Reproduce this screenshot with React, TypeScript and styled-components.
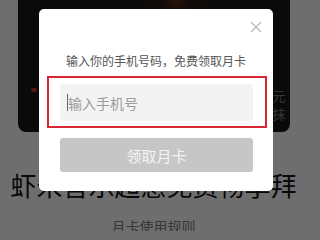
import React from "react";
import styled, { createGlobalStyle } from "styled-components";

const Global = createGlobalStyle`
  html, body { margin: 0; padding: 0; background: #fff; }
  body { font-family: "Noto Sans CJK SC", "Noto Sans", sans-serif; width: 307px; height: 231px; overflow: hidden; }
`;

const Page = styled.div`
  width: 307px;
  height: 231px;
  display: flex;
  flex-direction: column;
  align-items: center;
  background: #fff;
  overflow: hidden;
`;

const Card = styled.div`
  width: 272px;
  height: 132px;
  flex-shrink: 0;
  background: radial-gradient(circle at 58% 0%, #5a2e1c 0, #2a1810 14px, #181818 40px);
  border-radius: 0 0 8px 8px;
  display: flex;
  justify-content: flex-end;
  align-items: flex-end;
  padding: 0 4px 10px 0;
  box-sizing: border-box;
  position: relative;
`;

const CardSide = styled.div`
  display: flex;
  flex-direction: column;
  gap: 2px;
  color: #7c7c7c;
  font-size: 13px;
  line-height: 16px;
`;

const Dot = styled.span`
  position: absolute;
  left: 13px;
  top: 88px;
  width: 6px;
  height: 4px;
  border-radius: 3px;
  background: #c0392b;
`;

const Headline = styled.div`
  margin-top: 38px;
  font-size: 26px;
  line-height: 30px;
  color: #141414;
  white-space: nowrap;
`;

const Rule = styled.div`
  margin-top: 16px;
  font-size: 14px;
  line-height: 20px;
  color: #808080;
`;

const Overlay = styled.div`
  position: fixed;
  inset: 0;
  background: rgba(0, 0, 0, 0.57);
`;

const Modal = styled.div`
  position: fixed;
  left: 39px;
  top: 9px;
  width: 234px;
  height: 182px;
  box-sizing: border-box;
  background: #fff;
  border-radius: 5px;
  padding: 44px 6px 0 8px;
  display: flex;
  flex-direction: column;
`;

const Close = styled.button`
  position: absolute;
  right: 11px;
  top: 12px;
  width: 12px;
  height: 12px;
  padding: 0;
  border: none;
  background: none;
  display: flex;
`;

const Title = styled.div`
  font-size: 12px;
  line-height: 16px;
  color: #555;
  text-align: center;
  padding-right: 2px;
`;

const Highlight = styled.div`
  margin-top: 7px;
  height: 52px;
  box-sizing: border-box;
  border: 2px solid #d62632;
  padding: 6px 12px 5px 11px;
  display: flex;
`;

const Field = styled.div`
  flex: 1;
  background: #f3f3f3;
  border-radius: 3px;
  display: flex;
  align-items: center;
  padding-left: 7px;
`;

const Caret = styled.span`
  width: 1px;
  height: 17px;
  background: #666;
`;

const Placeholder = styled.span`
  font-size: 14px;
  color: #9b9b9b;
  line-height: 20px;
`;

const Submit = styled.button`
  margin: 10px 14px 0 13px;
  height: 34px;
  border: none;
  border-radius: 3px;
  background: #c6c6c6;
  color: #f4f4f4;
  font-family: inherit;
  font-size: 15px;
  padding: 0;
`;

export default function App() {
  return (
    <>
      <Global />
      <Page>
        <Card>
          <Dot />
          <CardSide>
            <span>元</span>
            <span>抹</span>
          </CardSide>
        </Card>
        <Headline>虾米音乐超惠免费畅享拜</Headline>
        <Rule>月卡使用规则</Rule>
      </Page>
      <Overlay />
      <Modal>
        <Close aria-label="关闭">
          <svg width="12" height="12" viewBox="0 0 12 12">
            <path d="M1 1 L11 11 M11 1 L1 11" stroke="#b5b5b5" strokeWidth="1.1" fill="none" />
          </svg>
        </Close>
        <Title>输入你的手机号码，免费领取月卡</Title>
        <Highlight>
          <Field>
            <Caret />
            <Placeholder>输入手机号</Placeholder>
          </Field>
        </Highlight>
        <Submit>领取月卡</Submit>
      </Modal>
    </>
  );
}
